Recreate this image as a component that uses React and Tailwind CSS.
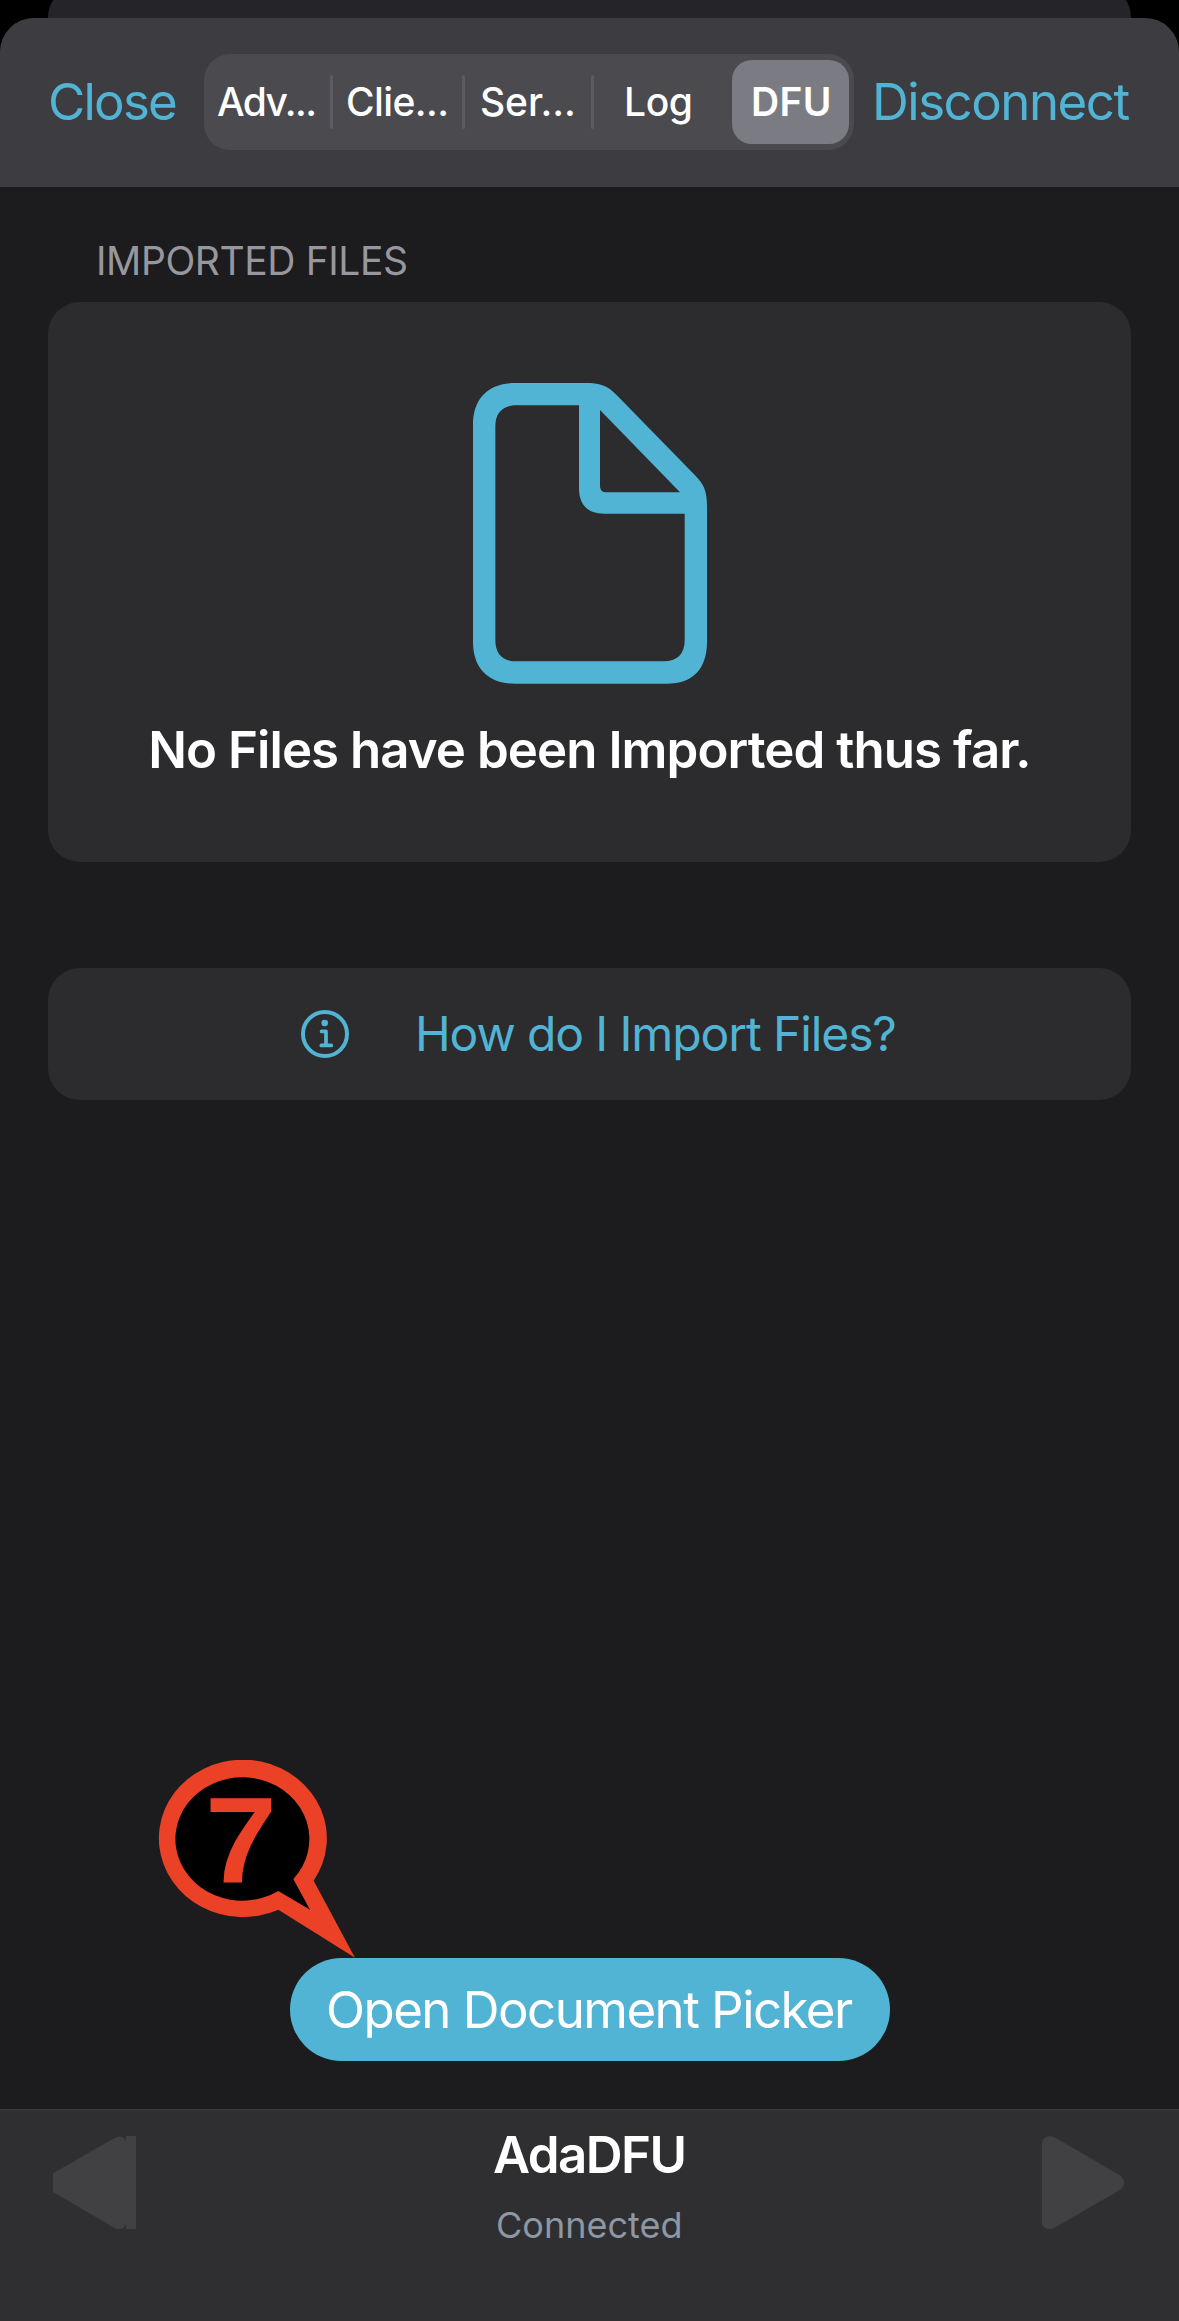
import React from "react";

function FileIcon() {
  return (
    <svg viewBox="99 69 702 903" className="h-[301px] w-[234px] fill-[#52b4d4]">
      <path
        fillRule="evenodd"
        d="M225 69H435C480 69 502 76 532 107L765 346C793 374 801 395 801 440V845C801 925 760 971 680 971H225C145 971 99 925 99 845V195C99 115 145 69 225 69ZM230 136C188 136 166 158 166 200V840C166 882 188 904 230 904H670C712 904 734 882 734 840V461H493C443 461 417 435 417 385V136ZM480 150V377C480 390 487 397 500 397H720Z"
      />
    </svg>
  );
}

function InfoIcon() {
  return (
    <svg viewBox="0 0 48 48" className="h-12 w-12" fill="none" stroke="#52b4d4" strokeLinecap="round" strokeLinejoin="round">
      <circle cx="24" cy="24" r="22" strokeWidth="4" />
      <circle cx="23.7" cy="13" r="3.3" fill="#52b4d4" stroke="none" />
      <path d="M20.6 21.4H25V35.2M20.3 35.4H30.3" strokeWidth="3.7" />
    </svg>
  );
}

function Callout() {
  return (
    <div className="absolute top-[1760px] left-[158px] h-[198px] w-[197px]">
      <svg viewBox="54 59 591 594" className="h-[198px] w-[197px]">
        <path d="M415 508A252 236 0 1 1 521 421L645 652Z" fill="#eb4127" />
        <path d="M415 452A201 185 0 1 1 460 416L510 508Z" fill="#000" />
      </svg>
      <span className="absolute top-[21px] left-[47px] origin-left scale-x-[1.06] font-['Liberation_Sans',sans-serif] text-[122px] leading-[120px] font-bold text-[#eb4127]">
        7
      </span>
    </div>
  );
}

function Divider() {
  return <div className="h-[54px] w-[3px] shrink-0 rounded-full bg-[#5c5b61]" />;
}

function Segments() {
  return (
    <div className="ml-[19px] flex h-24 w-[650px] shrink-0 items-center rounded-[26px] bg-[#4b4a4f] pl-px text-[39px] leading-[48px] font-[480] text-white">
      <div className="w-[125px] shrink-0 pl-[12px] tracking-[-1.6px]">Adv...</div>
      <Divider />
      <div className="w-[129px] shrink-0 pl-[13px] tracking-[-0.6px]">Clie...</div>
      <Divider />
      <div className="w-[126px] shrink-0 pl-[15px] tracking-[-0.1px]">Ser...</div>
      <Divider />
      <div className="w-[138px] shrink-0 pl-[30px] tracking-[-0.4px]">Log</div>
      <div className="flex h-[84px] w-[117px] shrink-0 items-center rounded-[20px] bg-[#7b7b83] pl-[19px] font-[560] tracking-[0.3px]">
        DFU
      </div>
    </div>
  );
}

export default function App() {
  return (
    <div className="relative flex h-[2321px] w-[1179px] flex-col overflow-hidden bg-black font-['Inter',sans-serif]">
      <div className="h-[18px] shrink-0 overflow-hidden px-12">
        <div className="-mt-[13px] h-[60px] rounded-t-[30px] bg-[#252429]" />
      </div>

      <div className="flex flex-1 flex-col overflow-hidden rounded-t-[34px] bg-[#1c1c1e]">
        <header className="flex h-[169px] shrink-0 items-center bg-[#3d3c41] pb-px pl-12 text-[51px] leading-[60px] text-[#52b4d4]">
          <button className="w-[137px] text-left tracking-[-1.75px]">Close</button>
          <Segments />
          <button className="ml-[18px] tracking-[-1.5px]">Disconnect</button>
        </header>

        <main className="flex flex-1 flex-col px-12">
          <h2 className="mt-[50px] pl-12 text-[39px] leading-[48px] tracking-[-0.4px] text-[#98979e]">IMPORTED FILES</h2>
          <section className="mt-[17px] flex h-[560px] w-[1083px] flex-col items-center rounded-[32px] bg-[#2c2c2e] pt-[81px]">
            <FileIcon />
            <p className="mt-[36px] text-[51px] leading-[60px] font-semibold tracking-[-0.95px] whitespace-nowrap text-white">
              No Files have been Imported thus far.
            </p>
          </section>
          <button className="mt-[106px] flex h-[132px] w-[1083px] items-center rounded-[32px] bg-[#2c2c2e] pl-[253px] text-[48px] leading-[60px] tracking-[-1.1px] text-[#52b4d4]">
            <InfoIcon />
            <span className="ml-[66px]">How do I Import Files?</span>
          </button>
          <button className="mt-auto mb-[48px] ml-[242px] h-[103px] w-[600px] rounded-full bg-[#52b4d4] pl-[36px] text-left text-[51px] leading-[60px] tracking-[-1.54px] text-white">
            Open Document Picker
          </button>
        </main>

        <footer className="flex h-[212px] shrink-0 justify-between border-t border-[#3b3b3d] bg-[#2f2f31] pr-[54px] pl-[53px]">
          <svg viewBox="159 138 249 279" className="mt-[26px] h-[93px] w-[83px] fill-[#414143]">
            <path d="M159 250L340 146C358 135 376 139 378 157V138H408V417H378V400C375 417 358 422 340 412L159 306Z" />
          </svg>
          <div className="flex w-[192px] flex-col items-start">
            <span className="mt-[15px] text-[51px] leading-[60px] font-semibold tracking-[-1.56px] text-white">AdaDFU</span>
            <span className="mt-[16px] pl-[3px] text-[36px] leading-[48px] text-[#8d98a4]">Connected</span>
          </div>
          <svg viewBox="192 138 249 279" className="mt-[26px] h-[93px] w-[83px] fill-[#414143]">
            <path d="M192 165C192 140 212 132 235 145L424 255C443 266 443 290 424 301L235 410C212 424 192 416 192 393Z" />
          </svg>
        </footer>
      </div>

      <Callout />
    </div>
  );
}
